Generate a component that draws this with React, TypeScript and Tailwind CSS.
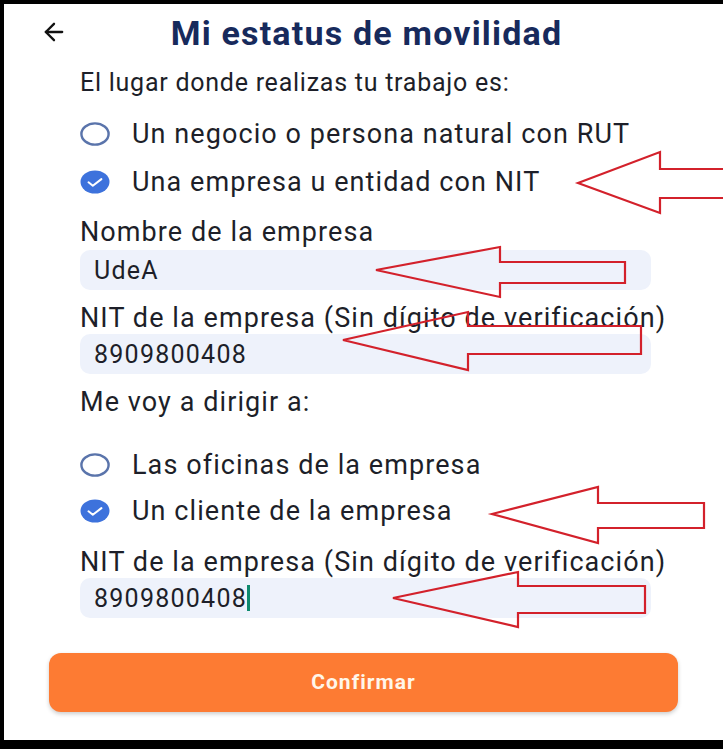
import { ArrowLeft } from "lucide-react";

const font = { fontFamily: "Roboto, 'Noto Sans', sans-serif" };

function Radio({ checked, label, className }: { checked?: boolean; label: string; className: string }) {
  return (
    <div className={`flex h-[32px] items-center ${className}`}>
      {checked ? (
        <svg width="30" height="24" viewBox="0 0 30 24">
          <ellipse cx="15" cy="12" rx="14.5" ry="11.5" fill="#3d72dc" />
          <path d="M8.5 12.3l4.3 3.4 8.6-6.6" fill="none" stroke="#fff" strokeWidth="2" strokeLinecap="round" strokeLinejoin="round" />
        </svg>
      ) : (
        <svg width="30" height="24" viewBox="0 0 30 24">
          <ellipse cx="15" cy="12" rx="13.6" ry="10.6" fill="none" stroke="#5a74ab" strokeWidth="2.4" />
        </svg>
      )}
      <span className="ml-[22px] text-[27px] leading-none tracking-[0.04em] text-[#1d1f29]">{label}</span>
    </div>
  );
}

function Field({ value, cursor, className }: { value: string; cursor?: boolean; className: string }) {
  return (
    <div className={`flex h-[40px] w-[571px] items-center rounded-[10px] bg-[#eef2fb] px-[14px] ${className}`}>
      <span className="text-[25px] leading-none tracking-[0.05em] text-[#1d1f29]">{value}</span>
      {cursor && <span className="h-[26px] w-[3px] bg-[#0f8a6e]" />}
    </div>
  );
}

function Label({ text, className, size = "text-[27px] tracking-[0.04em]" }: { text: string; className: string; size?: string }) {
  return (
    <div className={`flex h-[32px] items-center leading-none text-[#1d1f29] ${size} ${className}`}>
      {text}
    </div>
  );
}

// red outline arrows drawn over the screenshot
const arrows = [
  "578,183 660,152 660,169 726,169 726,198 660,198 660,213",
  "376,270 500,247 500,262 625,262 625,283 500,283 500,297",
  "343,340 468,312 468,326 641,326 641,354 468,354 468,370",
  "492,514 598,487 598,503 704,503 704,528 598,528 598,543",
  "393,598 518,572 518,586 645,586 645,613 518,613 518,627",
];

export default function App() {
  return (
    <div className="relative h-[749px] w-[723px] overflow-hidden bg-black pl-[4px] pt-[4px]" style={font}>
      <div className="flex h-[736px] flex-col bg-white">
        {/* Header */}
        <header className="relative flex h-[58px] items-center justify-center">
          <ArrowLeft className="absolute left-[36px] top-[14px]" size={28} strokeWidth={2} color="#111" />
          <h1 className="ml-[6px] text-[34px] font-bold leading-none tracking-[0.035em] text-[#172a5c]">
            Mi estatus de movilidad
          </h1>
        </header>

        <div className="flex flex-col pl-[76px]">
          <Label text="El lugar donde realizas tu trabajo es:" className="mt-[4px]" size="text-[25px] tracking-[0.03em]" />
          <Radio label="Un negocio o persona natural con RUT" className="mt-[20px]" />
          <Radio checked label="Una empresa u entidad con NIT" className="mt-[16px]" />

          <Label text="Nombre de la empresa" className="mt-[18px]" />
          <Field value="UdeA" className="mt-[2px]" />

          <Label text="NIT de la empresa (Sin dígito de verificación)" className="mt-[12px]" />
          <Field value="8909800408" />

          <Label text="Me voy a dirigir a:" className="mt-[12px]" />
          <Radio label="Las oficinas de la empresa" className="mt-[31px]" />
          <Radio checked label="Un cliente de la empresa" className="mt-[14px]" />

          <Label text="NIT de la empresa (Sin dígito de verificación)" className="mt-[19px]" />
          <Field value="8909800408" cursor />
        </div>

        <button className="mx-[45px] mt-[35px] h-[59px] rounded-[12px] bg-[#fd7b33] text-[21px] font-bold tracking-[0.05em] text-[#fff6ea] shadow-[0_2px_4px_rgba(0,0,0,0.2)]">
          Confirmar
        </button>
      </div>

      <svg className="pointer-events-none absolute left-0 top-0" width="723" height="749" viewBox="0 0 723 749">
        {arrows.map((p) => (
          <polygon key={p} points={p} fill="none" stroke="#d3212b" strokeWidth="2.2" strokeLinejoin="miter" />
        ))}
      </svg>
    </div>
  );
}
